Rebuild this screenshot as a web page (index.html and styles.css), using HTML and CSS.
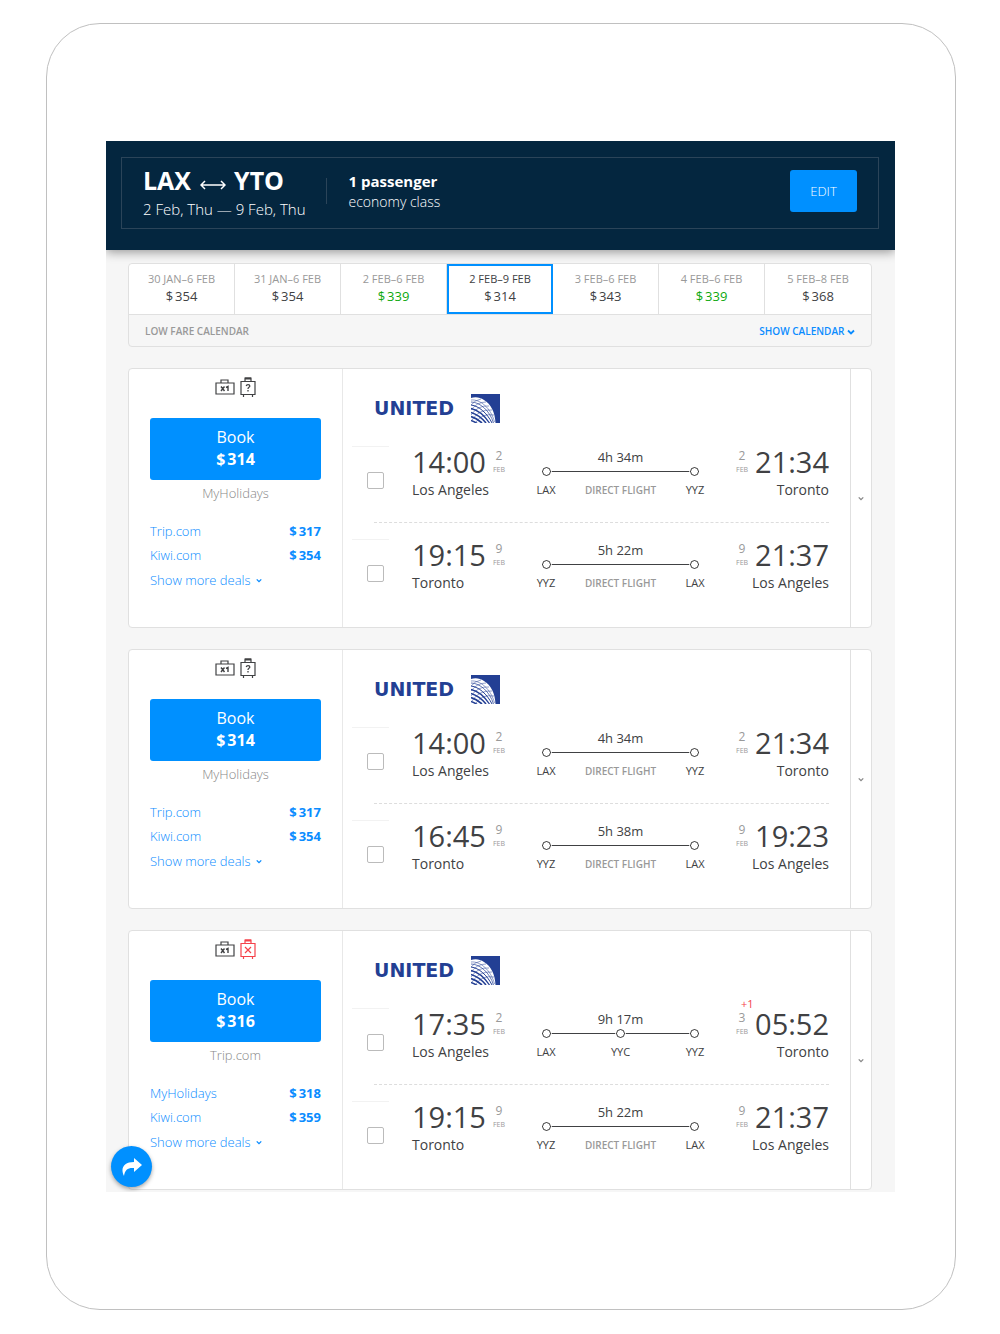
FILE: index.html
```html
<!DOCTYPE html>
<html lang="en">
<head>
<meta charset="utf-8">
<meta name="viewport" content="width=device-width, initial-scale=1">
<title>Flights LAX – YTO</title>
<link rel="stylesheet" href="styles.css">
</head>
<body>
<svg class="sprite" aria-hidden="true">
  <symbol id="cabin" viewBox="0 0 20 20"><path d="M1 6h18v11H1zM6 6V3h7v3" fill="none" stroke="currentColor" stroke-width="1.2"/><path d="M6 9.500l3.500 4.500M9.500 9.500L6 14M11 10.500l2-1V14" fill="none" stroke="currentColor" stroke-width="1.400"/></symbol>
  <symbol id="case" viewBox="0 0 16 20"><path d="M1 4.500h14v13H1zM5 4.500V1h6v3.500M3.500 18v2M12.500 18v2" fill="none" stroke="currentColor" stroke-width="1.200"/><path d="M5 1.500h6" stroke="currentColor" stroke-width="2"/></symbol>
  <symbol id="ask" viewBox="0 0 16 20"><path d="M6.200 9q.3-1.300 1.900-1.300 1.700 0 1.700 1.300 0 .8-.9 1.300T8 12M8 13v1.400" fill="none" stroke="currentColor" stroke-width="1.300"/></symbol>
  <symbol id="none" viewBox="0 0 16 20"><path d="M5 8l6 6M11 8l-6 6" fill="none" stroke="currentColor" stroke-width="1.200"/></symbol>
  <symbol id="down" viewBox="0 0 8 6"><path d="M1 1.500l3 3 3-3" fill="none" stroke="currentColor" stroke-width="1.800"/></symbol>
  <symbol id="globe" viewBox="0 0 29 29">
    <path d="M0 0h29v29H0z" fill="#233f94"/>
    <path d="M0 4C4 2.500 9 3 13 6C20 10 24 18 24.500 29H0z" fill="#fff"/>
    <g fill="none" stroke="#233f94">
      <path d="M0 6C9 5 20 14 23.500 28" stroke-width=".5"/>
      <path d="M0 8C9 8 19 17 22.500 29" stroke-width=".7"/>
      <path d="M0 11C8 12 16 19 21 29" stroke-width="1"/>
      <path d="M0 14.500C7 16 13 21 18.500 29" stroke-width="1.300"/>
      <path d="M0 18.500C5 20 10 23 15 29" stroke-width="1.600"/>
      <path d="M0 22.500c4 1 7 3 11 6.500" stroke-width="1.700"/>
      <path d="M0 26.500c2 .5 4 1.500 6 3" stroke-width="1.600"/>
      <path d="M0 11Q4 6 10 5M0 16Q6 8 15 8M0 21Q7 11 18 12M1 26Q8 15 21 16M5 28Q11 19 23 21" stroke-width=".5"/>
    </g>
  </symbol>
</svg>
<div class="device">
<main class="screen">
  <header class="top">
    <div class="search">
      <div class="trip">
        <h1>LAX <svg class="both" viewBox="0 0 26 10" role="img" aria-label="to and from"><path d="M1 5h24M5 1L1 5l4 4M21 1l4 4-4 4" fill="none" stroke="#fff" stroke-width="1.500"/></svg> YTO</h1>
        <p>2 Feb, Thu — 9 Feb, Thu</p>
      </div>
      <div class="people"><strong>1 passenger</strong><p>economy class</p></div>
      <button class="edit" type="button">EDIT</button>
    </div>
  </header>

  <div class="content">
    <section class="calendar">
      <div class="fares">
        <button class="fare" type="button"><span>30 JAN–6 FEB</span><b><i>$</i>354</b></button>
        <button class="fare" type="button"><span>31 JAN–6 FEB</span><b><i>$</i>354</b></button>
        <button class="fare low" type="button"><span>2 FEB–6 FEB</span><b><i>$</i>339</b></button>
        <button class="fare current" type="button"><span>2 FEB–9 FEB</span><b><i>$</i>314</b></button>
        <button class="fare" type="button"><span>3 FEB–6 FEB</span><b><i>$</i>343</b></button>
        <button class="fare low" type="button"><span>4 FEB–6 FEB</span><b><i>$</i>339</b></button>
        <button class="fare" type="button"><span>5 FEB–8 FEB</span><b><i>$</i>368</b></button>
      </div>
      <div class="calendar-foot"><span>LOW FARE CALENDAR</span><a href="#">SHOW CALENDAR <svg class="chev"><use href="#down"/></svg></a></div>
    </section>

    <article class="ticket">
      <div class="offers">
        <div class="bags"><svg class="cabin"><use href="#cabin"/></svg><svg class="case"><use href="#case"/><use href="#ask"/></svg></div>
        <button class="book" type="button"><span>Book</span><strong><i>$</i>314</strong></button>
        <p class="seller">MyHolidays</p>
        <a class="deal" href="#"><span>Trip.com</span><b><i>$</i>317</b></a>
        <a class="deal" href="#"><span>Kiwi.com</span><b><i>$</i>354</b></a>
        <a class="more" href="#">Show more deals <svg class="chev small"><use href="#down"/></svg></a>
      </div>
      <div class="route">
        <div class="airline"><span>UNITED</span><svg><use href="#globe"/></svg></div>
        <div class="leg">
          <div class="pick"><input type="checkbox" aria-label="Select LAX to YYZ"></div>
          <div class="stop"><div class="when"><span class="time">14:00</span><span class="date">2<small>FEB</small></span></div><p>Los Angeles</p></div>
          <div class="path"><p>4h 34m</p><div class="line"><i></i><i></i></div><div class="codes"><span>LAX</span><em>DIRECT FLIGHT</em><span>YYZ</span></div></div>
          <div class="stop end"><div class="when"><span class="date">2<small>FEB</small></span><span class="time">21:34</span></div><p>Toronto</p></div>
        </div>
        <hr>
        <div class="leg">
          <div class="pick"><input type="checkbox" aria-label="Select YYZ to LAX"></div>
          <div class="stop"><div class="when"><span class="time">19:15</span><span class="date">9<small>FEB</small></span></div><p>Toronto</p></div>
          <div class="path"><p>5h 22m</p><div class="line"><i></i><i></i></div><div class="codes"><span>YYZ</span><em>DIRECT FLIGHT</em><span>LAX</span></div></div>
          <div class="stop end"><div class="when"><span class="date">9<small>FEB</small></span><span class="time">21:37</span></div><p>Los Angeles</p></div>
        </div>
      </div>
      <button class="expand" type="button" aria-label="Show details"><svg class="chev"><use href="#down"/></svg></button>
    </article>

    <article class="ticket">
      <div class="offers">
        <div class="bags"><svg class="cabin"><use href="#cabin"/></svg><svg class="case"><use href="#case"/><use href="#ask"/></svg></div>
        <button class="book" type="button"><span>Book</span><strong><i>$</i>314</strong></button>
        <p class="seller">MyHolidays</p>
        <a class="deal" href="#"><span>Trip.com</span><b><i>$</i>317</b></a>
        <a class="deal" href="#"><span>Kiwi.com</span><b><i>$</i>354</b></a>
        <a class="more" href="#">Show more deals <svg class="chev small"><use href="#down"/></svg></a>
      </div>
      <div class="route">
        <div class="airline"><span>UNITED</span><svg><use href="#globe"/></svg></div>
        <div class="leg">
          <div class="pick"><input type="checkbox" aria-label="Select LAX to YYZ"></div>
          <div class="stop"><div class="when"><span class="time">14:00</span><span class="date">2<small>FEB</small></span></div><p>Los Angeles</p></div>
          <div class="path"><p>4h 34m</p><div class="line"><i></i><i></i></div><div class="codes"><span>LAX</span><em>DIRECT FLIGHT</em><span>YYZ</span></div></div>
          <div class="stop end"><div class="when"><span class="date">2<small>FEB</small></span><span class="time">21:34</span></div><p>Toronto</p></div>
        </div>
        <hr>
        <div class="leg">
          <div class="pick"><input type="checkbox" aria-label="Select YYZ to LAX"></div>
          <div class="stop"><div class="when"><span class="time">16:45</span><span class="date">9<small>FEB</small></span></div><p>Toronto</p></div>
          <div class="path"><p>5h 38m</p><div class="line"><i></i><i></i></div><div class="codes"><span>YYZ</span><em>DIRECT FLIGHT</em><span>LAX</span></div></div>
          <div class="stop end"><div class="when"><span class="date">9<small>FEB</small></span><span class="time">19:23</span></div><p>Los Angeles</p></div>
        </div>
      </div>
      <button class="expand" type="button" aria-label="Show details"><svg class="chev"><use href="#down"/></svg></button>
    </article>

    <article class="ticket">
      <div class="offers">
        <div class="bags"><svg class="cabin"><use href="#cabin"/></svg><svg class="case missing"><use href="#case"/><use href="#none"/></svg></div>
        <button class="book" type="button"><span>Book</span><strong><i>$</i>316</strong></button>
        <p class="seller">Trip.com</p>
        <a class="deal" href="#"><span>MyHolidays</span><b><i>$</i>318</b></a>
        <a class="deal" href="#"><span>Kiwi.com</span><b><i>$</i>359</b></a>
        <a class="more" href="#">Show more deals <svg class="chev small"><use href="#down"/></svg></a>
      </div>
      <div class="route">
        <div class="airline"><span>UNITED</span><svg><use href="#globe"/></svg></div>
        <div class="leg">
          <div class="pick"><input type="checkbox" aria-label="Select LAX to YYZ"></div>
          <div class="stop"><div class="when"><span class="time">17:35</span><span class="date">2<small>FEB</small></span></div><p>Los Angeles</p></div>
          <div class="path"><p>9h 17m</p><div class="line"><i></i><i></i><i></i></div><div class="codes"><span>LAX</span><span>YYC</span><span>YYZ</span></div></div>
          <div class="stop end"><div class="when"><span class="date">3<small>FEB</small><sup class="plus">+1</sup></span><span class="time">05:52</span></div><p>Toronto</p></div>
        </div>
        <hr>
        <div class="leg">
          <div class="pick"><input type="checkbox" aria-label="Select YYZ to LAX"></div>
          <div class="stop"><div class="when"><span class="time">19:15</span><span class="date">9<small>FEB</small></span></div><p>Toronto</p></div>
          <div class="path"><p>5h 22m</p><div class="line"><i></i><i></i></div><div class="codes"><span>YYZ</span><em>DIRECT FLIGHT</em><span>LAX</span></div></div>
          <div class="stop end"><div class="when"><span class="date">9<small>FEB</small></span><span class="time">21:37</span></div><p>Los Angeles</p></div>
        </div>
      </div>
      <button class="expand" type="button" aria-label="Show details"><svg class="chev"><use href="#down"/></svg></button>
    </article>
  </div>
  <button class="share" type="button" aria-label="Share"><svg viewBox="0 0 22 20"><path d="M13 1l8 7-8 7v-4C7 10.500 4 12.500 3 19-1 11 3 5 13 5z" fill="#fff"/></svg></button>
</main>
</div>
</body>
</html>
```
FILE: styles.css
```css
* { box-sizing: border-box; }
body {
  margin: 0;
  padding: 23px 44px 24px 46px;
  background: #fff;
  color: #404143;
  font-family: "Open Sans", "Noto Sans", sans-serif;
  font-size: 13px;
  line-height: 18px;
}
h1, p, hr { margin: 0; }
i, em { font-style: normal; }
b i, strong i { margin-right: 2px; }
a { color: #0a8cff; text-decoration: none; }
button { font: inherit; color: inherit; border: 0; padding: 0; margin: 0; background: none; cursor: pointer; }
.sprite { display: none; }
.device { padding: 117px 60px 117px 59px; border: 1px solid #c0c0c0; border-radius: 54px; }
.screen { position: relative; overflow: hidden; background: #f6f6f6; }

.top { padding: 16px 16px 21px 15px; background: #04263f; box-shadow: 0 2px 10px rgba(0, 0, 0, .4); }
.search { display: flex; align-items: flex-start; height: 72px; padding: 10px 21px; border: 1px solid #2b4459; color: #fff; }
.trip { flex: 0 0 160px; white-space: nowrap; }
.trip h1 { font-size: 25px; line-height: 24px; font-weight: 700; }
.trip p { margin-top: 7px; font-size: 15px; line-height: 20px; font-weight: 300; }
.both { width: 26px; height: 10px; margin: 0 2px; }
.people { margin: 3px 0 0 20px; padding-left: 23px; font-size: 14px; line-height: 20px; position: relative; }
.people::before { content: ""; position: absolute; left: 0; top: 7px; width: 1px; height: 26px; background: #2b4459; }
.people strong { font-size: 15px; }
.people p { font-weight: 300; }
.edit { width: 67px; height: 42px; margin: 2px 0 0 auto; border-radius: 3px; background: #0090ff; font-size: 13px; font-weight: 300; }

.content { display: flex; flex-direction: column; gap: 21px; padding: 13px 23px 2px 22px; }
.calendar, .ticket { background: #fff; border: 1px solid #e0e0e0; border-radius: 4px; }
.calendar { background: #f6f6f6; }
.fares { display: grid; grid-template-columns: repeat(7, 1fr); height: 51px; background: #fff; border-bottom: 1px solid #e0e0e0; border-radius: 4px 4px 0 0; }
.fare { display: flex; flex-direction: column; align-items: center; justify-content: center; padding-bottom: 2px; border-right: 1px solid #e0e0e0; }
.fare:last-child { border-right: 0; }
.fare span { font-size: 11px; line-height: 16px; color: #999; }
.fare b { font-size: 13px; line-height: 18px; font-weight: 400; }
.fare.low b { color: #0ca80c; }
.fare.current { border: 2px solid #0090ff; }
.fare.current span { color: #404143; }
.calendar-foot { display: flex; justify-content: space-between; align-items: center; height: 31px; padding: 0 16px; font-size: 10px; font-weight: 600; color: #999; }
.chev { width: 8px; height: 6px; }
.chev.small { width: 6px; height: 5px; margin-left: 2px; vertical-align: 2px; }

.ticket { display: flex; height: 260px; }
.offers { display: flex; flex-direction: column; width: 214px; padding: 8px 21px 0; border-right: 1px solid #e8e8e8; }
.bags { display: flex; justify-content: center; align-items: center; gap: 5px; height: 20px; }
.cabin { width: 20px; height: 20px; }
.case { width: 16px; height: 20px; }
.missing { color: #f5424b; }
.book { display: flex; flex-direction: column; align-items: center; justify-content: center; height: 62px; margin-top: 21px; padding-bottom: 2px; border-radius: 3px; background: #0090ff; color: #fff; font-size: 16px; line-height: 22px; }
.seller { margin: 3px 0 16px; text-align: center; line-height: 20px; font-weight: 300; color: #888; }
.deal { display: flex; justify-content: space-between; line-height: 24px; }
.deal span, .more { font-weight: 300; }
.more { line-height: 26px; }

.route { flex: 1; padding: 25px 21px 0 9px; }
.airline { display: flex; justify-content: space-between; align-items: center; width: 126px; height: 29px; margin: 0 0 23px 22px; color: #233f94; font: bold 19px/29px "DejaVu Sans", sans-serif; }
.airline svg { width: 29px; height: 29px; }
.leg { display: grid; grid-template-columns: 42px 96px 1fr 96px; column-gap: 18px; height: 76px; }
.pick { width: 37px; padding: 25px 0 0 15px; border-top: 1px solid #f2f2f2; }
.pick input { display: block; appearance: none; width: 17px; height: 17px; margin: 0; border: 1px solid #bbb; border-radius: 2px; background: #fff; }
.when { display: flex; gap: 7px; height: 35px; }
.end .when { justify-content: flex-end; }
.time { font-size: 29px; line-height: 32px; }
.date { display: flex; flex-direction: column; align-items: center; position: relative; padding-top: 2px; font-size: 12px; line-height: 16px; color: #999; }
.date small { font-size: 7px; line-height: 12px; }
.plus { position: absolute; left: 5px; top: -9px; font-size: 11px; line-height: 10px; color: #f5424b; }
.end { text-align: right; }
.stop p { font-size: 14px; line-height: 18px; }
.path { padding-top: 2px; text-align: center; }
.line { display: flex; justify-content: space-between; height: 9px; margin: 1px 16px 0; background: linear-gradient(#404143, #404143) 0 4px / 100% 1px no-repeat; }
.line i { width: 9px; height: 9px; border: 1px solid #222; border-radius: 50%; background: #fff; outline: 1px solid #fff; }
.codes { display: flex; justify-content: space-between; margin-top: 5px; font-size: 11px; }
.codes span { width: 40px; }
.codes em { font-size: 10px; font-weight: 600; color: #999; }
.route hr { margin: 0 0 16px 22px; border: 0; border-top: 1px dashed #ddd; }
.expand { width: 21px; border-left: 1px solid #e0e0e0; color: #888; }
.expand .chev { display: block; width: 6px; height: 5px; margin: 0 auto; }

.share { position: absolute; left: 5px; bottom: 5px; display: flex; align-items: center; justify-content: center; width: 41px; height: 41px; border-radius: 50%; background: #0090ff; box-shadow: 0 2px 4px rgba(0, 0, 0, .35); }
.share svg { width: 22px; height: 20px; }
```
